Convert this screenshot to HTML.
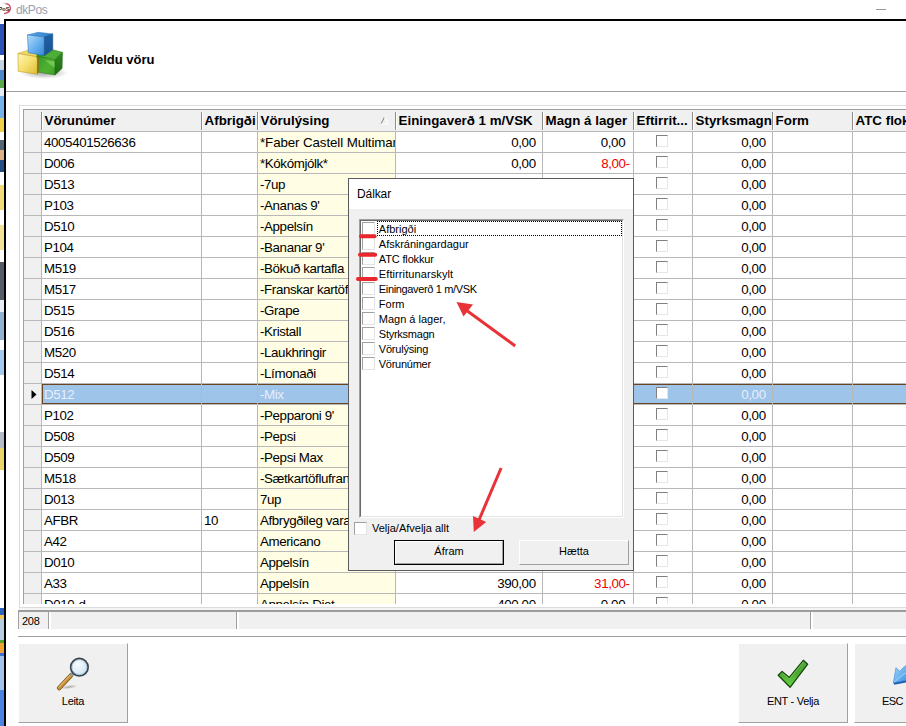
<!DOCTYPE html>
<html lang="is"><head><meta charset="utf-8"><title>dkPos</title>
<style>
html,body{margin:0;padding:0}
body{width:906px;height:726px;overflow:hidden;background:#fff;position:relative;font-family:"Liberation Sans",sans-serif;font-size:13px;color:#000}
div,span,i,svg{position:absolute;box-sizing:border-box}
.grid span,.btn span,.dlg span{position:static}
.titletxt{left:16px;top:2px;font-size:12px;color:#9a9eb2;line-height:16px;letter-spacing:-.4px}
.strip{left:0;top:19px;width:4px;height:707px;background:linear-gradient(to bottom,#ffffff 0px,#ffffff 5px,#2c52b8 5px,#2c52b8 36px,#ffffff 36px,#ffffff 41px,#c4d2e2 41px,#c4d2e2 51px,#4a88c8 51px,#4a88c8 61px,#58a848 61px,#58a848 69px,#e4ecf4 69px,#e4ecf4 77px,#74b2ea 77px,#74b2ea 99px,#f0d24a 99px,#f0d24a 113px,#ffffff 113px,#ffffff 121px,#566472 121px,#566472 131px,#dcb088 131px,#dcb088 141px,#244c84 141px,#244c84 153px,#ffffff 153px,#ffffff 166px,#f2dc78 166px,#f2dc78 191px,#ffffff 191px,#ffffff 206px,#f2e296 206px,#f2e296 231px,#ffffff 231px,#ffffff 243px,#545c66 243px,#545c66 281px,#e8eef4 281px,#e8eef4 293px,#92b2d2 293px,#92b2d2 321px,#ffffff 321px,#ffffff 331px,#a4caf0 331px,#a4caf0 356px,#ffffff 356px,#ffffff 413px,#b4bcc6 413px,#b4bcc6 429px,#e8d468 429px,#e8d468 451px,#ffffff 451px,#ffffff 589px,#2c62c2 589px,#2c62c2 596px,#f0c252 596px,#f0c252 600px,#b8cce0 600px,#b8cce0 621px,#52a232 621px,#52a232 624px,#f0a232 624px,#f0a232 634px,#3c72d2 634px,#3c72d2 637px,#a4c2ea 637px,#a4c2ea 671px,#4a84e0 671px,#4a84e0 707px)}
.bl{left:4px;top:19px;width:2px;height:707px;background:#000}
.bt{left:4px;top:19px;width:902px;height:2px;background:#000}
.pagetitle{left:88px;top:51.6px;font-weight:bold;font-size:13px;line-height:16px}
.sep1{left:6px;top:91px;width:900px;height:1px;background:#a0a0a0}
.pnl{left:19px;top:105px;width:900px;height:503px;border-left:1px solid #dcdcdc;border-top:1px solid #dcdcdc;border-bottom:1px solid #dcdcdc}
.grid{left:23px;top:109px;width:883px;height:495px;overflow:hidden;background:#fff}
.grid .gtop{left:0;top:0;width:883px;height:1px;background:#a8a8a8}
.hdr{left:0;top:0;width:883px;height:22px;background:#f0f0f0;border-top:1px solid #a0a0a0;border-left:1px solid #a0a0a0}
.hc{top:0;height:21px;font-weight:bold;font-size:13.33px;line-height:22.8px;padding-left:3.6px;white-space:nowrap;overflow:hidden}
.hc{margin-left:-1px}
.hc:before{content:"";position:absolute;left:0;top:2px;width:1px;height:18px;background:#8c8c8c;box-shadow:1px 0 0 #fff}
.hc:first-child:before{display:none}
.sort{right:5px;top:6px}
.row{left:0;width:883px;height:22px}
.row div{top:0;height:22px;border-left:1px solid #b8b8b8;border-top:1px solid #b8b8b8;border-bottom:1px solid #b8b8b8;line-height:21px;font-size:13.33px;padding:0 3px 0 2px;white-space:nowrap;overflow:hidden;background:#fff;letter-spacing:-0.38px}
.row .ci{background:#f0f0f0;border-left-color:#a0a0a0}
.row .y{background:#fffde3}
.row .r{text-align:right}
.row .neg{color:#f00000}
.row .cb i{left:22px;top:3px;width:12px;height:12px;border:1px solid #e6e6e6;border-top-color:#808080;border-left-color:#808080;background:#fff}
.row.sel div.c{background:#9fc4e9;color:#e8eefa;box-shadow:inset 0 1px 0 #6b4420,inset 0 -1px 0 #6b4420}
.row.sel div.c.first{box-shadow:inset 0 1px 0 #6b4420,inset 0 -1px 0 #6b4420,inset 1px 0 0 #6b4420}
.ind{left:7px;top:6px}
.sbar{left:18px;top:610px;width:888px;height:19px;background:#f0f0f0;border-top:2px solid #9c9c9c;font-size:11px}
.sbpre{left:19px;top:608px;width:887px;height:2px;background:#f4f4f4}
.sbar i{top:0;width:1px;height:17px;background:#a0a0a0}
.sbar i.w{background:#fff;width:2px}
.sbar span{left:4px;top:2px;line-height:14px;letter-spacing:-0.3px}
.sep2{left:18px;top:636px;width:888px;height:1px;background:#a0a0a0}
.btn{top:643px;width:110px;height:80px;background:#f0f0f0;border-top:1px solid #fff;border-left:1px solid #fff;border-right:1px solid #a0a0a0;border-bottom:1px solid #a0a0a0;font-size:11px;text-align:center}
.btn .lbl{left:0;top:50px;width:100%;line-height:14px;letter-spacing:-0.3px;white-space:nowrap}
.btn svg{left:38px;top:14px}
.dlg{left:348px;top:178px;width:286px;height:393px;background:#f0f0f0;border:1px solid #5a5a5a;font-size:11px}
.dlg .ttl{left:0;top:0;width:284px;height:30px;background:#fff;font-size:12px;line-height:16px;padding:7px 0 0 8px;letter-spacing:-0.1px}
.lb{left:10px;top:40px;width:265px;height:299px;background:#fff;border:1px solid #a0a0a0;border-right-color:#fff;border-bottom-color:#fff}
.lb:before{content:"";position:absolute;left:0;top:0;right:0;bottom:0;border:1px solid #696969;border-right-color:#e3e3e3;border-bottom-color:#e3e3e3}
.it{left:2px;width:260px;height:15px;line-height:15px;white-space:nowrap}
.it i,.chk{width:13px;height:13px;background:#fff;border:1px solid #a0a0a0;border-right-color:#e3e3e3;border-bottom-color:#e3e3e3}
.it i{left:0px;top:0px}
.it span{position:absolute;left:16.8px;top:0}
.focus{left:17px;top:1px;width:245px;height:15px;border:1px dotted #000}
.chk{left:5px;top:343px}
.chkl{left:23px;top:342px;line-height:15px;white-space:nowrap}
.b2{top:361px;width:110px;height:25px;background:#f0f0f0;text-align:center;line-height:21px}
.b2.def{line-height:19px}
.b2.def{border:1px solid #000}
.b2 b{position:absolute;left:0;top:0;right:0;bottom:0;border:1px solid #fff;border-right-color:#a0a0a0;border-bottom-color:#a0a0a0;font-weight:normal}
.ann{left:0;top:0}

.row .m{padding-right:4.5px}
.row .m.neg{padding-right:3.4px}

</style></head>
<body>
<svg style="left:0;top:0" width="14" height="18" viewBox="0 0 14 18">
<path d="M5.5 3.6 Q10.6 4.2 10.4 8.6 Q10 12.6 4 13.6" fill="none" stroke="#c8283a" stroke-width="1.3" opacity=".85"/>
<path d="M2.5 3.4 Q5 2.6 7 3.6" fill="none" stroke="#b0b0c4" stroke-width=".8" opacity=".6"/>
<text x="-1.5" y="10.6" font-family="Liberation Sans, sans-serif" font-weight="bold" font-size="5.6" fill="#222">PoS</text>
</svg>
<div class="titletxt">dkPos</div>
<div class="minim" style="left:876px;top:9px;width:10px;height:1px;background:#999"></div>
<div class="strip"></div>
<div class="bl"></div><div class="bt"></div>
<svg class="cube" style="left:10px;top:25px" width="60" height="60" viewBox="10 25 60 60">
<defs>
<linearGradient id="bf" x1="0" y1="0" x2="1" y2="1"><stop offset="0" stop-color="#b4dcfa"/><stop offset=".5" stop-color="#6cb2ee"/><stop offset="1" stop-color="#3287dc"/></linearGradient>
<linearGradient id="br" x1="0" y1="0" x2="0" y2="1"><stop offset="0" stop-color="#1c62a8"/><stop offset="1" stop-color="#1a5490"/></linearGradient>
<linearGradient id="btp" x1="0" y1="0" x2="1" y2="0"><stop offset="0" stop-color="#5aa6e6"/><stop offset="1" stop-color="#2c7cc8"/></linearGradient>
<linearGradient id="yf" x1="0" y1="0" x2="1" y2="1"><stop offset="0" stop-color="#fff6b4"/><stop offset=".5" stop-color="#f6e070"/><stop offset="1" stop-color="#dfba30"/></linearGradient>
<linearGradient id="gf" x1="0" y1="0" x2="1" y2="1"><stop offset="0" stop-color="#3a9a26"/><stop offset=".6" stop-color="#50b234"/><stop offset="1" stop-color="#3c9c28"/></linearGradient>
<linearGradient id="gr" x1="0" y1="0" x2="0" y2="1"><stop offset="0" stop-color="#2f8a1e"/><stop offset="1" stop-color="#226e14"/></linearGradient>
<radialGradient id="sh" cx=".5" cy=".5" r=".5"><stop offset="0" stop-color="#000" stop-opacity=".35"/><stop offset="1" stop-color="#000" stop-opacity="0"/></radialGradient>
</defs>
<ellipse cx="44" cy="73" rx="24" ry="6" fill="url(#sh)"/>
<!-- yellow -->
<path d="M17.9 53.5 L27.8 50.2 L38.5 53 L38.5 56.4 L37.3 56.8 Z" fill="#f0d860" stroke="#c8a428" stroke-width=".5"/>
<path d="M17.9 53.5 L37.3 56.8 L37.3 74.2 L18.3 71.3 Z" fill="url(#yf)" stroke="#c09a20" stroke-width=".6"/>
<!-- green -->
<path d="M36.5 53 L45 53 L45 58 L36.5 58 Z" fill="#3a9228"/>
<path d="M38.5 56.4 L44.3 55.6 L52.8 49.8 L62.5 52.3 L55 59.7 Z" fill="#4cae34" stroke="#2c8018" stroke-width=".5"/>
<path d="M38.5 56.4 L55 59.7 L55 75 L38.5 72.1 Z" fill="url(#gf)" stroke="#2a7c18" stroke-width=".6"/>
<path d="M44.5 60 L55 61.6 L55 68 Z" fill="#7cd05c" opacity=".75"/>
<path d="M37.1 56.7 L38.7 56.3 L38.7 72.4 L37.1 74.2 Z" fill="#8a7012"/>
<path d="M55 59.7 L62.5 52.3 L62.1 68.4 L55 75 Z" fill="url(#gr)" stroke="#1e6410" stroke-width=".5"/>
<!-- blue -->
<path d="M27.5 34.9 L38.1 32.3 L52.8 33.9 L44.3 37 Z" fill="url(#btp)" stroke="#2a70b8" stroke-width=".5"/>
<path d="M27.5 34.9 L44.3 37 L44.3 55.6 L28.3 52.7 Z" fill="url(#bf)" stroke="#2c78c4" stroke-width=".6"/>
<path d="M44.3 37 L52.8 33.9 L52.8 49.8 L44.3 55.6 Z" fill="url(#br)" stroke="#184c84" stroke-width=".5"/>
</svg>
<div class="pagetitle">Veldu vöru</div>
<div class="sep1"></div>
<div class="pnl"></div>
<div class="grid">
<div class="hdr"><div class="hc" style="left:0px;width:18px"><span></span></div><div class="hc" style="left:18px;width:160px"><span>Vörunúmer</span></div><div class="hc" style="left:178px;width:56px"><span>Afbrigði</span></div><div class="hc" style="left:234px;width:138px"><span>Vörulýsing</span><svg class="sort" width="10" height="9" viewBox="0 0 10 9"><path d="M1 8 L4.5 1" stroke="#808080" stroke-width="1" fill="none"/><path d="M4.5 1 L8.5 8 L1 8" stroke="#fff" stroke-width="1" fill="none"/></svg></div><div class="hc" style="left:372px;width:147px"><span>Einingaverð 1 m/VSK</span></div><div class="hc" style="left:519px;width:91px"><span>Magn á lager</span></div><div class="hc" style="left:610px;width:59px"><span>Eftirrit...</span></div><div class="hc" style="left:669px;width:80px"><span>Styrksmagn</span></div><div class="hc" style="left:749px;width:80px"><span>Form</span></div><div class="hc" style="left:829px;width:80px"><span>ATC flokkur</span></div></div>
<div class="row" style="top:22px"><div class="ci" style="left:0px;width:18px"></div><div class="c first" style="left:18px;width:160px">4005401526636</div><div class="c" style="left:178px;width:56px"></div><div class="c y" style="left:234px;width:138px"><span style="letter-spacing:-.1px">*Faber Castell Multimark</span></div><div class="c r" style="left:372px;width:147px">0,00&nbsp;</div><div class="c r m" style="left:519px;width:91px">0,00&nbsp;</div><div class="c cb" style="left:610px;width:59px"><i></i></div><div class="c r" style="left:669px;width:80px">0,00&nbsp;</div><div class="c" style="left:749px;width:80px"></div><div class="c" style="left:829px;width:80px"></div></div>
<div class="row" style="top:43px"><div class="ci" style="left:0px;width:18px"></div><div class="c first" style="left:18px;width:160px">D006</div><div class="c" style="left:178px;width:56px"></div><div class="c y" style="left:234px;width:138px">*Kókómjólk*</div><div class="c r" style="left:372px;width:147px">0,00&nbsp;</div><div class="c r m neg" style="left:519px;width:91px">8,00-</div><div class="c cb" style="left:610px;width:59px"><i></i></div><div class="c r" style="left:669px;width:80px">0,00&nbsp;</div><div class="c" style="left:749px;width:80px"></div><div class="c" style="left:829px;width:80px"></div></div>
<div class="row" style="top:64px"><div class="ci" style="left:0px;width:18px"></div><div class="c first" style="left:18px;width:160px">D513</div><div class="c" style="left:178px;width:56px"></div><div class="c y" style="left:234px;width:138px">-7up</div><div class="c r" style="left:372px;width:147px">0,00&nbsp;</div><div class="c r m" style="left:519px;width:91px">0,00&nbsp;</div><div class="c cb" style="left:610px;width:59px"><i></i></div><div class="c r" style="left:669px;width:80px">0,00&nbsp;</div><div class="c" style="left:749px;width:80px"></div><div class="c" style="left:829px;width:80px"></div></div>
<div class="row" style="top:85px"><div class="ci" style="left:0px;width:18px"></div><div class="c first" style="left:18px;width:160px">P103</div><div class="c" style="left:178px;width:56px"></div><div class="c y" style="left:234px;width:138px">-Ananas 9'</div><div class="c r" style="left:372px;width:147px">0,00&nbsp;</div><div class="c r m" style="left:519px;width:91px">0,00&nbsp;</div><div class="c cb" style="left:610px;width:59px"><i></i></div><div class="c r" style="left:669px;width:80px">0,00&nbsp;</div><div class="c" style="left:749px;width:80px"></div><div class="c" style="left:829px;width:80px"></div></div>
<div class="row" style="top:106px"><div class="ci" style="left:0px;width:18px"></div><div class="c first" style="left:18px;width:160px">D510</div><div class="c" style="left:178px;width:56px"></div><div class="c y" style="left:234px;width:138px">-Appelsín</div><div class="c r" style="left:372px;width:147px">0,00&nbsp;</div><div class="c r m" style="left:519px;width:91px">0,00&nbsp;</div><div class="c cb" style="left:610px;width:59px"><i></i></div><div class="c r" style="left:669px;width:80px">0,00&nbsp;</div><div class="c" style="left:749px;width:80px"></div><div class="c" style="left:829px;width:80px"></div></div>
<div class="row" style="top:127px"><div class="ci" style="left:0px;width:18px"></div><div class="c first" style="left:18px;width:160px">P104</div><div class="c" style="left:178px;width:56px"></div><div class="c y" style="left:234px;width:138px">-Bananar 9'</div><div class="c r" style="left:372px;width:147px">0,00&nbsp;</div><div class="c r m" style="left:519px;width:91px">0,00&nbsp;</div><div class="c cb" style="left:610px;width:59px"><i></i></div><div class="c r" style="left:669px;width:80px">0,00&nbsp;</div><div class="c" style="left:749px;width:80px"></div><div class="c" style="left:829px;width:80px"></div></div>
<div class="row" style="top:148px"><div class="ci" style="left:0px;width:18px"></div><div class="c first" style="left:18px;width:160px">M519</div><div class="c" style="left:178px;width:56px"></div><div class="c y" style="left:234px;width:138px">-Bökuð kartafla</div><div class="c r" style="left:372px;width:147px">0,00&nbsp;</div><div class="c r m" style="left:519px;width:91px">0,00&nbsp;</div><div class="c cb" style="left:610px;width:59px"><i></i></div><div class="c r" style="left:669px;width:80px">0,00&nbsp;</div><div class="c" style="left:749px;width:80px"></div><div class="c" style="left:829px;width:80px"></div></div>
<div class="row" style="top:169px"><div class="ci" style="left:0px;width:18px"></div><div class="c first" style="left:18px;width:160px">M517</div><div class="c" style="left:178px;width:56px"></div><div class="c y" style="left:234px;width:138px">-Franskar kartöflur</div><div class="c r" style="left:372px;width:147px">0,00&nbsp;</div><div class="c r m" style="left:519px;width:91px">0,00&nbsp;</div><div class="c cb" style="left:610px;width:59px"><i></i></div><div class="c r" style="left:669px;width:80px">0,00&nbsp;</div><div class="c" style="left:749px;width:80px"></div><div class="c" style="left:829px;width:80px"></div></div>
<div class="row" style="top:190px"><div class="ci" style="left:0px;width:18px"></div><div class="c first" style="left:18px;width:160px">D515</div><div class="c" style="left:178px;width:56px"></div><div class="c y" style="left:234px;width:138px">-Grape</div><div class="c r" style="left:372px;width:147px">0,00&nbsp;</div><div class="c r m" style="left:519px;width:91px">0,00&nbsp;</div><div class="c cb" style="left:610px;width:59px"><i></i></div><div class="c r" style="left:669px;width:80px">0,00&nbsp;</div><div class="c" style="left:749px;width:80px"></div><div class="c" style="left:829px;width:80px"></div></div>
<div class="row" style="top:211px"><div class="ci" style="left:0px;width:18px"></div><div class="c first" style="left:18px;width:160px">D516</div><div class="c" style="left:178px;width:56px"></div><div class="c y" style="left:234px;width:138px">-Kristall</div><div class="c r" style="left:372px;width:147px">0,00&nbsp;</div><div class="c r m" style="left:519px;width:91px">0,00&nbsp;</div><div class="c cb" style="left:610px;width:59px"><i></i></div><div class="c r" style="left:669px;width:80px">0,00&nbsp;</div><div class="c" style="left:749px;width:80px"></div><div class="c" style="left:829px;width:80px"></div></div>
<div class="row" style="top:232px"><div class="ci" style="left:0px;width:18px"></div><div class="c first" style="left:18px;width:160px">M520</div><div class="c" style="left:178px;width:56px"></div><div class="c y" style="left:234px;width:138px">-Laukhringir</div><div class="c r" style="left:372px;width:147px">0,00&nbsp;</div><div class="c r m" style="left:519px;width:91px">0,00&nbsp;</div><div class="c cb" style="left:610px;width:59px"><i></i></div><div class="c r" style="left:669px;width:80px">0,00&nbsp;</div><div class="c" style="left:749px;width:80px"></div><div class="c" style="left:829px;width:80px"></div></div>
<div class="row" style="top:253px"><div class="ci" style="left:0px;width:18px"></div><div class="c first" style="left:18px;width:160px">D514</div><div class="c" style="left:178px;width:56px"></div><div class="c y" style="left:234px;width:138px">-Límonaði</div><div class="c r" style="left:372px;width:147px">0,00&nbsp;</div><div class="c r m" style="left:519px;width:91px">0,00&nbsp;</div><div class="c cb" style="left:610px;width:59px"><i></i></div><div class="c r" style="left:669px;width:80px">0,00&nbsp;</div><div class="c" style="left:749px;width:80px"></div><div class="c" style="left:829px;width:80px"></div></div>
<div class="row sel" style="top:274px"><div class="ci" style="left:0px;width:18px"><svg width="7" height="9" viewBox="0 0 7 9" class="ind"><path d="M0.5 0 L5.5 4.5 L0.5 9 Z" fill="#000"/></svg></div><div class="c first" style="left:18px;width:160px">D512</div><div class="c" style="left:178px;width:56px"></div><div class="c y" style="left:234px;width:138px">-Mix</div><div class="c r" style="left:372px;width:147px">0,00&nbsp;</div><div class="c r m" style="left:519px;width:91px">0,00&nbsp;</div><div class="c cb" style="left:610px;width:59px"><i></i></div><div class="c r" style="left:669px;width:80px">0,00&nbsp;</div><div class="c" style="left:749px;width:80px"></div><div class="c" style="left:829px;width:80px"></div></div>
<div class="row" style="top:295px"><div class="ci" style="left:0px;width:18px"></div><div class="c first" style="left:18px;width:160px">P102</div><div class="c" style="left:178px;width:56px"></div><div class="c y" style="left:234px;width:138px">-Pepparoni 9'</div><div class="c r" style="left:372px;width:147px">0,00&nbsp;</div><div class="c r m" style="left:519px;width:91px">0,00&nbsp;</div><div class="c cb" style="left:610px;width:59px"><i></i></div><div class="c r" style="left:669px;width:80px">0,00&nbsp;</div><div class="c" style="left:749px;width:80px"></div><div class="c" style="left:829px;width:80px"></div></div>
<div class="row" style="top:316px"><div class="ci" style="left:0px;width:18px"></div><div class="c first" style="left:18px;width:160px">D508</div><div class="c" style="left:178px;width:56px"></div><div class="c y" style="left:234px;width:138px">-Pepsi</div><div class="c r" style="left:372px;width:147px">0,00&nbsp;</div><div class="c r m" style="left:519px;width:91px">0,00&nbsp;</div><div class="c cb" style="left:610px;width:59px"><i></i></div><div class="c r" style="left:669px;width:80px">0,00&nbsp;</div><div class="c" style="left:749px;width:80px"></div><div class="c" style="left:829px;width:80px"></div></div>
<div class="row" style="top:337px"><div class="ci" style="left:0px;width:18px"></div><div class="c first" style="left:18px;width:160px">D509</div><div class="c" style="left:178px;width:56px"></div><div class="c y" style="left:234px;width:138px">-Pepsi Max</div><div class="c r" style="left:372px;width:147px">0,00&nbsp;</div><div class="c r m" style="left:519px;width:91px">0,00&nbsp;</div><div class="c cb" style="left:610px;width:59px"><i></i></div><div class="c r" style="left:669px;width:80px">0,00&nbsp;</div><div class="c" style="left:749px;width:80px"></div><div class="c" style="left:829px;width:80px"></div></div>
<div class="row" style="top:358px"><div class="ci" style="left:0px;width:18px"></div><div class="c first" style="left:18px;width:160px">M518</div><div class="c" style="left:178px;width:56px"></div><div class="c y" style="left:234px;width:138px">-Sætkartöflufranskar</div><div class="c r" style="left:372px;width:147px">0,00&nbsp;</div><div class="c r m" style="left:519px;width:91px">0,00&nbsp;</div><div class="c cb" style="left:610px;width:59px"><i></i></div><div class="c r" style="left:669px;width:80px">0,00&nbsp;</div><div class="c" style="left:749px;width:80px"></div><div class="c" style="left:829px;width:80px"></div></div>
<div class="row" style="top:379px"><div class="ci" style="left:0px;width:18px"></div><div class="c first" style="left:18px;width:160px">D013</div><div class="c" style="left:178px;width:56px"></div><div class="c y" style="left:234px;width:138px">7up</div><div class="c r" style="left:372px;width:147px">0,00&nbsp;</div><div class="c r m" style="left:519px;width:91px">0,00&nbsp;</div><div class="c cb" style="left:610px;width:59px"><i></i></div><div class="c r" style="left:669px;width:80px">0,00&nbsp;</div><div class="c" style="left:749px;width:80px"></div><div class="c" style="left:829px;width:80px"></div></div>
<div class="row" style="top:400px"><div class="ci" style="left:0px;width:18px"></div><div class="c first" style="left:18px;width:160px">AFBR</div><div class="c" style="left:178px;width:56px">10</div><div class="c y" style="left:234px;width:138px">Afbrygðileg vara</div><div class="c r" style="left:372px;width:147px">0,00&nbsp;</div><div class="c r m" style="left:519px;width:91px">0,00&nbsp;</div><div class="c cb" style="left:610px;width:59px"><i></i></div><div class="c r" style="left:669px;width:80px">0,00&nbsp;</div><div class="c" style="left:749px;width:80px"></div><div class="c" style="left:829px;width:80px"></div></div>
<div class="row" style="top:421px"><div class="ci" style="left:0px;width:18px"></div><div class="c first" style="left:18px;width:160px">A42</div><div class="c" style="left:178px;width:56px"></div><div class="c y" style="left:234px;width:138px">Americano</div><div class="c r" style="left:372px;width:147px">0,00&nbsp;</div><div class="c r m" style="left:519px;width:91px">0,00&nbsp;</div><div class="c cb" style="left:610px;width:59px"><i></i></div><div class="c r" style="left:669px;width:80px">0,00&nbsp;</div><div class="c" style="left:749px;width:80px"></div><div class="c" style="left:829px;width:80px"></div></div>
<div class="row" style="top:442px"><div class="ci" style="left:0px;width:18px"></div><div class="c first" style="left:18px;width:160px">D010</div><div class="c" style="left:178px;width:56px"></div><div class="c y" style="left:234px;width:138px">Appelsín</div><div class="c r" style="left:372px;width:147px">0,00&nbsp;</div><div class="c r m" style="left:519px;width:91px">0,00&nbsp;</div><div class="c cb" style="left:610px;width:59px"><i></i></div><div class="c r" style="left:669px;width:80px">0,00&nbsp;</div><div class="c" style="left:749px;width:80px"></div><div class="c" style="left:829px;width:80px"></div></div>
<div class="row" style="top:463px"><div class="ci" style="left:0px;width:18px"></div><div class="c first" style="left:18px;width:160px">A33</div><div class="c" style="left:178px;width:56px"></div><div class="c y" style="left:234px;width:138px">Appelsín</div><div class="c r" style="left:372px;width:147px">390,00&nbsp;</div><div class="c r m neg" style="left:519px;width:91px">31,00-</div><div class="c cb" style="left:610px;width:59px"><i></i></div><div class="c r" style="left:669px;width:80px">0,00&nbsp;</div><div class="c" style="left:749px;width:80px"></div><div class="c" style="left:829px;width:80px"></div></div>
<div class="row" style="top:484px"><div class="ci" style="left:0px;width:18px"></div><div class="c first" style="left:18px;width:160px">D010-d</div><div class="c" style="left:178px;width:56px"></div><div class="c y" style="left:234px;width:138px">Appelsín Diet</div><div class="c r" style="left:372px;width:147px">400,00&nbsp;</div><div class="c r m" style="left:519px;width:91px">0,00&nbsp;</div><div class="c cb" style="left:610px;width:59px"><i></i></div><div class="c r" style="left:669px;width:80px">0,00&nbsp;</div><div class="c" style="left:749px;width:80px"></div><div class="c" style="left:829px;width:80px"></div></div>
</div>
<div class="sbpre"></div>
<div class="sbar"><i style="left:0"></i><span>208</span><i style="left:30px"></i><i class="w" style="left:31px"></i><i style="left:218px"></i><i class="w" style="left:219px"></i><i style="left:792px"></i><i class="w" style="left:793px"></i></div>
<div class="sep2"></div>
<div class="btn" style="left:18px"><svg style="left:34px;top:10px" width="40" height="40" viewBox="53 654 40 40">
<defs>
<radialGradient id="mg" cx=".4" cy=".35" r=".75"><stop offset="0" stop-color="#f6fbff"/><stop offset=".6" stop-color="#dcecf8"/><stop offset="1" stop-color="#bcd6ea"/></radialGradient>
<radialGradient id="ms" cx=".5" cy=".5" r=".5"><stop offset="0" stop-color="#000" stop-opacity=".3"/><stop offset="1" stop-color="#000" stop-opacity="0"/></radialGradient>
</defs>
<ellipse cx="69" cy="687" rx="9" ry="2" fill="url(#ms)" transform="rotate(-8 69 687)"/>
<path d="M71.2 675.2 L59.2 688" stroke="#7a4e14" stroke-width="4.5" stroke-linecap="round"/>
<path d="M71.2 675.2 L59.2 688" stroke="#c8923c" stroke-width="3.1" stroke-linecap="round"/>
<path d="M70.6 674.6 L58.8 687.2" stroke="#ecc880" stroke-width="1" stroke-linecap="round"/>
<path d="M73.6 672.8 L71 675.6" stroke="#8a9aa6" stroke-width="3.4"/>
<circle cx="79.4" cy="667.2" r="8.7" fill="url(#mg)" stroke="#3a444e" stroke-width="1.8"/>
<circle cx="79.4" cy="667.2" r="7.5" fill="none" stroke="#a8bccb" stroke-width=".8"/>
</svg><div class="lbl">Leita</div></div>
<div class="btn" style="left:738px"><svg style="left:34px;top:10px" width="40" height="40" viewBox="773 654 40 40">
<defs>
<linearGradient id="cg" x1="0" y1="0" x2="0" y2="1"><stop offset="0" stop-color="#58a840"/><stop offset=".45" stop-color="#4aa62e"/><stop offset="1" stop-color="#6cd646"/></linearGradient>
</defs>
<path d="M778.2 675.2 L782.1 671.4 L789.3 677.4 L803.3 660.3 L807.7 664.2 L790.1 687.3 Z" fill="url(#cg)" stroke="#154a0c" stroke-width="1.3" stroke-linejoin="round"/>
<path d="M782.2 672.8 L789.4 678.8 L803.4 661.8" fill="none" stroke="#8fd878" stroke-width=".8" opacity=".7"/>
</svg><div class="lbl">ENT - Velja</div></div>
<div class="btn" style="left:854px"><svg style="left:11px;top:10px" width="42" height="40" viewBox="866 654 42 40">
<defs>
<linearGradient id="ag" x1="0" y1="0" x2="1" y2="1"><stop offset="0" stop-color="#a6d6f9"/><stop offset=".55" stop-color="#6ab2f0"/><stop offset="1" stop-color="#3a8ee4"/></linearGradient>
</defs>
<path d="M893.3 682.4 L908 679.7 L908 682.2 L894.2 684.8 Z" fill="#1c64b0"/>
<path d="M893.4 682.8 L895.9 667.6 L899.8 671.3 Q903 667 908 664.4 L908 680 Z" fill="url(#ag)" stroke="#2a7ad0" stroke-width=".5"/>
<path d="M894.2 682 Q900 676 908 671.5" fill="none" stroke="#c4e4fb" stroke-width=".8" opacity=".8"/>
</svg><div class="lbl" style="text-align:left;left:27px;letter-spacing:-.55px">ESC - Hætta</div></div>
<div class="dlg">
<div class="ttl">Dálkar</div>
<div class="lb">
<div class="focus"></div>
<div class="it" style="top:2px"><i></i><span>Afbrigði</span></div>
<div class="it" style="top:17px"><i></i><span>Afskráningardagur</span></div>
<div class="it" style="top:32px"><i></i><span style="letter-spacing:-.15px">ATC flokkur</span></div>
<div class="it" style="top:47px"><i></i><span style="letter-spacing:.1px">Eftirritunarskylt</span></div>
<div class="it" style="top:62px"><i></i><span style="letter-spacing:-.35px">Einingaverð 1 m/VSK</span></div>
<div class="it" style="top:77px"><i></i><span>Form</span></div>
<div class="it" style="top:92px"><i></i><span>Magn á lager,</span></div>
<div class="it" style="top:107px"><i></i><span style="letter-spacing:-.25px">Styrksmagn</span></div>
<div class="it" style="top:122px"><i></i><span style="letter-spacing:-.2px">Vörulýsing</span></div>
<div class="it" style="top:137px"><i></i><span style="letter-spacing:-.27px">Vörunúmer</span></div>
</div>
<div class="chk"></div><div class="chkl">Velja/Afvelja allt</div>
<div class="b2 def" style="left:45px"><b>Áfram</b></div>
<div class="b2" style="left:170px"><b>Hætta</b></div>
</div>
<svg class="ann" width="906" height="726" viewBox="0 0 906 726">
<g stroke="#e8282c" stroke-width="4" stroke-linecap="round" fill="none">
<path d="M361 236.3 L374.5 236.3"/>
<path d="M360 254.8 L375.2 254.8"/>
<path d="M358 279 L375.8 279"/>
</g>
<g stroke="#e83238" stroke-width="3" fill="none">
<path d="M515.2 346 L466 310"/>
<path d="M501.1 468 L479 520"/>
</g>
<g fill="#e83238">
<path d="M456.5 302 L473 304.6 L463.5 316.5 Z"/>
<path d="M473.8 532.1 L473 516 L486.2 521.9 Z"/>
</g>
</svg>
</body></html>
